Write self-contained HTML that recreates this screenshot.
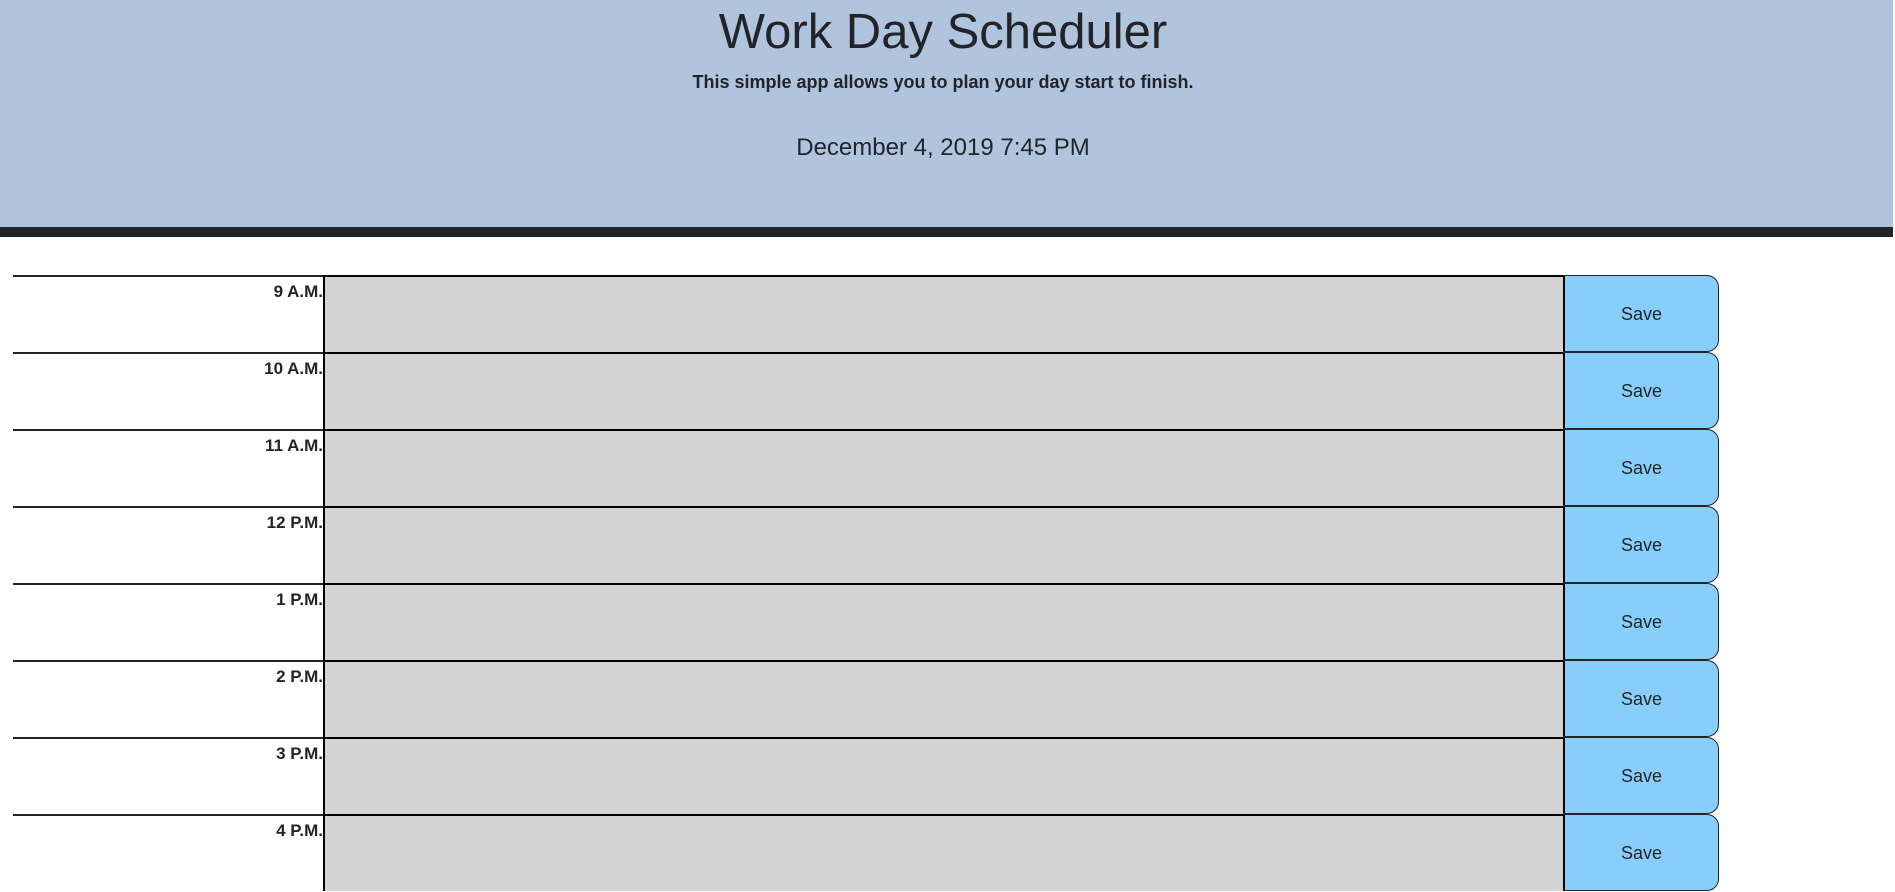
<!DOCTYPE html>
<html><head><style>
html,body{margin:0;padding:0;width:1895px;height:881px;overflow:hidden;background:#fff;font-family:"Liberation Sans",sans-serif;color:#212529}
.hdr{position:absolute;left:0;top:0;width:1893px;height:227px;background:#b0c4de;border-bottom:10px solid #212529}
.c{position:absolute;left:543px;width:800px;text-align:center;white-space:nowrap}
.t{top:2px;font-size:49px;line-height:60px}
.s{top:70px;font-size:18px;font-weight:bold;line-height:24px}
.d{top:133px;font-size:24px;line-height:30px}
.row{position:absolute;left:13px;height:77px;width:1706px}
.row .time{position:absolute;left:0;top:0;width:310px;height:75px;border-top:2px solid #212529;text-align:right;font-weight:bold;font-size:17px;line-height:22px;padding-top:4px;box-sizing:border-box}
.row .ta{position:absolute;left:310px;top:0;width:1240px;height:77px;background:#d3d3d3;border-left:2px solid #000;border-top:2px solid #000;box-sizing:border-box}
.row .btn{position:absolute;left:1550px;top:0;width:156px;height:77px;background:#87cefa;border:1px solid #212529;border-left:2px solid #000;border-radius:0 12px 12px 0;box-sizing:border-box;text-align:center;line-height:77px;font-size:18px}
</style></head><body>
<div class="hdr">
<div class="c t">Work Day Scheduler</div>
<div class="c s">This simple app allows you to plan your day start to finish.</div>
<div class="c d">December 4, 2019 7:45 PM</div>
</div>
<div class="row" style="top:275px"><div class="time">9 A.M.</div><div class="ta"></div><div class="btn">Save</div></div>
<div class="row" style="top:352px"><div class="time">10 A.M.</div><div class="ta"></div><div class="btn">Save</div></div>
<div class="row" style="top:429px"><div class="time">11 A.M.</div><div class="ta"></div><div class="btn">Save</div></div>
<div class="row" style="top:506px"><div class="time">12 P.M.</div><div class="ta"></div><div class="btn">Save</div></div>
<div class="row" style="top:583px"><div class="time">1 P.M.</div><div class="ta"></div><div class="btn">Save</div></div>
<div class="row" style="top:660px"><div class="time">2 P.M.</div><div class="ta"></div><div class="btn">Save</div></div>
<div class="row" style="top:737px"><div class="time">3 P.M.</div><div class="ta"></div><div class="btn">Save</div></div>
<div class="row" style="top:814px"><div class="time">4 P.M.</div><div class="ta"></div><div class="btn">Save</div></div>
</body></html>
